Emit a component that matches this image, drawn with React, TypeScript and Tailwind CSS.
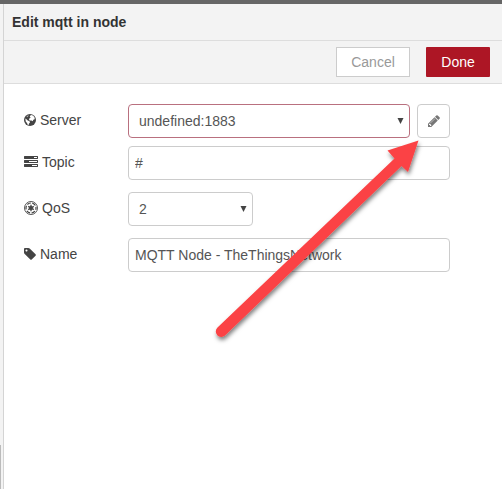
import React, { useState } from 'react';

const GlobeIcon = () => (
  <svg width="12" height="12" viewBox="0 0 24 24" aria-hidden="true">
    <circle cx="12" cy="12" r="12" fill="#444" />
    <path d="M12.500 3l3-1.200 3.500 2 2.600 4-.8 3.200-2.300.6-1 2.800-2.600-1.200-3.900-.2-1-2.500 1.500-2.500 2-.8-2-1.500z" fill="#fff" />
    <path d="M2.600 9l2.900 1.800 2 2.400 3.600 1.300.9 2.500-2 2-.6 3-2.400-.8-.8-3.200-2.600-2.600z" fill="#fff" />
    <path d="M5 5l3.500-2.500.8 1.200-2.800 2.800z" fill="#bbb" />
  </svg>
);

const TasksIcon = () => (
  <svg width="14" height="14" viewBox="0 0 1792 1792" fill="currentColor" aria-hidden="true">
    <path d="M1024 1408h640v-128h-640v128zm-384-512h1024v-128h-1024v128zm640-512h384v-128h-384v128zm512 832v256q0 26-19 45t-45 19h-1664q-26 0-45-19t-19-45v-256q0-26 19-45t45-19h1664q26 0 45 19t19 45zm0-512v256q0 26-19 45t-45 19h-1664q-26 0-45-19t-19-45v-256q0-26 19-45t45-19h1664q26 0 45 19t19 45zm0-512v256q0 26-19 45t-45 19h-1664q-26 0-45-19t-19-45v-256q0-26 19-45t45-19h1664q26 0 45 19t19 45z" />
  </svg>
);

const EmpireIcon = () => (
  <svg width="14" height="14" viewBox="0 0 28 28" fill="none" stroke="currentColor" aria-hidden="true">
    <circle cx="14" cy="14" r="13" strokeWidth="1.800" />
    <circle cx="14" cy="14" r="10" strokeWidth="2.400" strokeDasharray="7.500 2.972" strokeDashoffset="3.750" />
    <circle cx="14" cy="14" r="3.800" fill="currentColor" stroke="none" />
    <path d="M14 7.500v13M8.400 10.750l11.200 6.500M8.400 17.250l11.200-6.500" strokeWidth="2.600" />
  </svg>
);

const TagIcon = () => (
  <svg width="12" height="12" viewBox="128 128 1536 1536" fill="currentColor" aria-hidden="true">
    <path d="M576 448q0-53-37.5-90.5t-90.5-37.5-90.5 37.5-37.5 90.5 37.5 90.5 90.5 37.5 90.5-37.5 37.5-90.5zm1067 576q0 53-37 90l-491 492q-39 37-91 37-53 0-90-37l-715-716q-38-37-64.5-101t-26.5-117v-416q0-52 38-90t90-38h416q53 0 117 26.5t102 64.5l715 714q37 39 37 91z" />
  </svg>
);

const PencilIcon = () => (
  <svg width="14" height="14" viewBox="0 0 1792 1792" fill="currentColor" aria-hidden="true">
    <path d="M491 1536l91-91-235-235-91 91v107h128v128h107zm523-928q0-22-22-22-10 0-17 7l-542 542q-7 7-7 17 0 22 22 22 10 0 17-7l542-542q7-7 7-17zm-54-192l416 416-832 832h-416v-416zm683 96q0 53-37 90l-166 166-416-416 166-165q36-38 90-38 53 0 91 38l235 234q37 39 37 91z" />
  </svg>
);

const SelectArrow = () => (
  <svg
    className="pointer-events-none absolute right-1.5 top-3.5"
    width="7"
    height="6"
    viewBox="0 0 7 6"
    fill="#444"
    aria-hidden="true"
  >
    <path d="M.5 0h6L3.500 6z" />
  </svg>
);

// Red arrow that points at the edit button of the server row
const PointerArrow = () => (
  <svg
    className="pointer-events-none absolute right-[72px] top-12 overflow-visible"
    width="220"
    height="220"
    viewBox="210 132 220 220"
    aria-hidden="true"
  >
    <defs>
      <filter id="arrow-shadow" x="-10%" y="-10%" width="120%" height="120%">
        <feDropShadow dx="1" dy="3" stdDeviation="2" floodColor="#000" floodOpacity="0.5" />
      </filter>
    </defs>
    <path
      d="M418.500 140.500L387.500 150.500L394.500 158.500L217.500 327.500A5.400 5.400 0 0 0 225 335.500L401.500 166L408 172z"
      fill="#fb4344"
      filter="url(#arrow-shadow)"
    />
  </svg>
);

interface RowProps {
  id: string;
  label: string;
  icon: React.ReactNode;
  children: React.ReactNode;
}

const FormRow = ({ id, label, icon, children }: RowProps) => (
  <div className="flex items-center">
    <label htmlFor={id} className="flex w-[104px] shrink-0 items-center gap-1 pb-0.5">
      {icon}
      {label}
    </label>
    {children}
  </div>
);

const inputClass =
  'h-[34px] w-full min-w-0 rounded-[4px] border border-[#ccc] bg-white px-1.5 text-[#555] outline-none';
const selectClass =
  'h-[34px] w-full appearance-none rounded-[4px] border bg-white pl-2.5 pr-6 text-[#555] outline-none';

const App = () => {
  const [server, setServer] = useState('undefined:1883');
  const [topic, setTopic] = useState('#');
  const [qos, setQos] = useState('2');
  const [name, setName] = useState('MQTT Node - TheThingsNetwork');

  return (
    <div className="flex min-h-screen flex-col border-t-4 border-[#666] bg-white font-['Liberation_Sans',Arial,sans-serif] text-sm text-[#444]">
      <div className="flex flex-1">
        <div className="flex w-1 shrink-0 flex-col border-r border-[#d4d4d4] bg-[#f3f3f3]">
          <div className="mt-auto h-11 w-px bg-[#bbb]" />
        </div>

        <div className="min-w-0 flex-1">
          <header className="flex h-[37px] items-center border-b border-[#ddd] bg-[#f3f3f3] px-2">
            <h1 className="text-sm font-bold text-[#333]">Edit mqtt in node</h1>
          </header>

          <div className="flex h-[43px] items-center justify-end gap-4 border-b border-[#ddd] bg-[#f3f3f3] px-3">
            <button type="button" className="h-[30px] w-[74px] border border-[#ccc] bg-white text-[#999]">
              Cancel
            </button>
            <button type="button" className="h-[30px] w-16 rounded-[1px] bg-[#ad1625] text-white">
              Done
            </button>
          </div>

          <form className="relative pb-5 pl-5 pr-[52px] pt-5">
            <FormRow id="server" label="Server" icon={<GlobeIcon />}>
              <div className="flex flex-1 gap-[7px]">
                <div className="relative flex-1">
                  <select
                    id="server"
                    className={`${selectClass} border-[#b9707f]`}
                    value={server}
                    onChange={(e) => setServer(e.target.value)}
                  >
                    <option>undefined:1883</option>
                  </select>
                  <SelectArrow />
                </div>
                <button
                  type="button"
                  aria-label="Edit server"
                  className="flex h-[34px] w-[33px] items-center justify-center rounded-[4px] border border-[#ccc] bg-white text-[#777]"
                >
                  <PencilIcon />
                </button>
              </div>
            </FormRow>

            <div className="mt-2">
              <FormRow id="topic" label="Topic" icon={<TasksIcon />}>
                <input
                  id="topic"
                  type="text"
                  className={inputClass}
                  value={topic}
                  onChange={(e) => setTopic(e.target.value)}
                />
              </FormRow>
            </div>

            <div className="mt-3">
              <FormRow id="qos" label="QoS" icon={<EmpireIcon />}>
                <div className="relative w-[125px]">
                  <select
                    id="qos"
                    className={`${selectClass} border-[#ccc]`}
                    value={qos}
                    onChange={(e) => setQos(e.target.value)}
                  >
                    <option>0</option>
                    <option>1</option>
                    <option>2</option>
                  </select>
                  <SelectArrow />
                </div>
              </FormRow>
            </div>

            <div className="mt-3">
              <FormRow id="name" label="Name" icon={<TagIcon />}>
                <input
                  id="name"
                  type="text"
                  className={inputClass}
                  value={name}
                  onChange={(e) => setName(e.target.value)}
                />
              </FormRow>
            </div>

            <PointerArrow />
          </form>
        </div>
      </div>
    </div>
  );
};

export default App;
